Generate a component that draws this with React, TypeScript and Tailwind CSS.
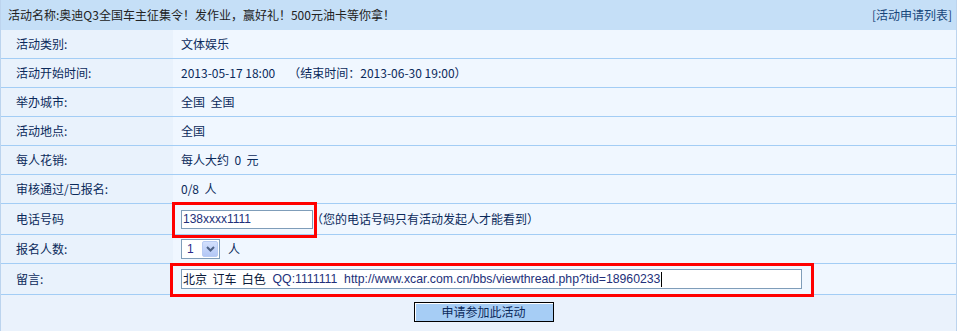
import React from 'react';

const font = { fontFamily: '"Noto Sans CJK SC", "Liberation Sans", sans-serif' };

interface RowProps {
  label: string;
  tall?: boolean;
  children: React.ReactNode;
}

function Row({ label, tall, children }: RowProps) {
  return (
    <div className={tall ? 'flex h-[31px] border-b border-[#a3cdf5]' : 'flex h-[29px] border-b border-[#a3cdf5]'}>
      <div className="w-[172px] shrink-0 bg-[#e9f2fc] pl-[15px] flex items-center">{label}</div>
      <div className="flex-1 bg-[#f0f7ff] pl-2 flex items-center whitespace-pre">{children}</div>
    </div>
  );
}

function Chevron() {
  return (
    <svg width="9" height="6" viewBox="0 0 9 6">
      <path d="M1 1 L4.5 4.5 L8 1" fill="none" stroke="#4d6185" strokeWidth="2" />
    </svg>
  );
}

export default function App() {
  return (
    <div className="relative w-[957px] h-[331px] text-[12px] text-[#0b2a5b] border-l border-r border-[#bcd4ee] bg-[#eaf2fc]" style={font}>
      <div className="h-[30px] bg-[#c5dff7] flex items-center justify-between pl-[7px] pr-[4px] pb-[1px]">
        <span className="text-[#222]">活动名称:奥迪Q3全国车主征集令！发作业，赢好礼！500元油卡等你拿！</span>
        <a className="text-[#17467a] cursor-pointer">[活动申请列表]</a>
      </div>

      <Row label="活动类别:">文体娱乐</Row>
      <Row label="活动开始时间:">
        <span>2013-05-17 18:00</span>
        <span className="ml-[13px]">（结束时间：2013-06-30 19:00）</span>
      </Row>
      <Row label="举办城市:">全国  全国</Row>
      <Row label="活动地点:">全国</Row>
      <Row label="每人花销:">每人大约  0  元</Row>
      <Row label="审核通过/已报名:">0/8  人</Row>
      <Row label="电话号码" tall>
        <input
          readOnly
          value="138xxxx1111"
          className="w-[132px] h-[19px] border border-[#7f9db9] bg-white pl-[1px] text-[12px] text-[#22307a] outline-none"
          style={{ fontFamily: '"Liberation Sans", Arial, sans-serif' }}
        />
        <span className="ml-[-2px]">（您的电话号码只有活动发起人才能看到）</span>
      </Row>
      <Row label="报名人数:">
        <div className="flex w-[39px] h-[20px] border border-[#7f9db9] bg-white">
          <span
            className="flex-1 pl-[5px] leading-[18px] text-[#2a2a8a]"
            style={{ fontFamily: '"Liberation Sans", Arial, sans-serif' }}
          >
            1
          </span>
          <span className="w-[16px] m-[1px] rounded-[2px] border border-[#b8cbf3] bg-gradient-to-b from-[#d3e0fd] to-[#b3c7f5] flex items-center justify-center">
            <Chevron />
          </span>
        </div>
        <span className="ml-[8px]">人</span>
      </Row>
      <Row label="留言:" tall>
        <div
          className="w-[621px] h-[20px] border border-[#7f9db9] bg-white pl-[1px] flex items-center whitespace-pre text-[12.25px] text-[#22307a]"
          style={{ fontFamily: '"Liberation Sans", Arial, "Noto Sans CJK SC", sans-serif' }}
        >
          <span className="text-[12px] text-[#0b1a3a]" style={font}>北京  订车  白色</span>
          <span>  QQ:1111111  http://www.xcar.com.cn/bbs/viewthread.php?tid=18960233</span>
          <span className="inline-block w-px h-[15px] bg-black ml-px" />
        </div>
      </Row>

      <div className="flex justify-center pt-[7px] pl-[10px]">
        <button className="w-[140px] h-[20px] border border-black bg-[#a6cdf5] shadow-[inset_1px_1px_0_#ffffff] text-[12px] text-[#0b2a5b] leading-[18px]">
          申请参加此活动
        </button>
      </div>

      <div className="absolute left-[171px] top-[202px] w-[145px] h-[36px] border-[3px] border-[#ff0000] pointer-events-none" />
      <div className="absolute left-[169px] top-[263px] w-[644px] h-[34px] border-[3px] border-[#ff0000] pointer-events-none" />
    </div>
  );
}
